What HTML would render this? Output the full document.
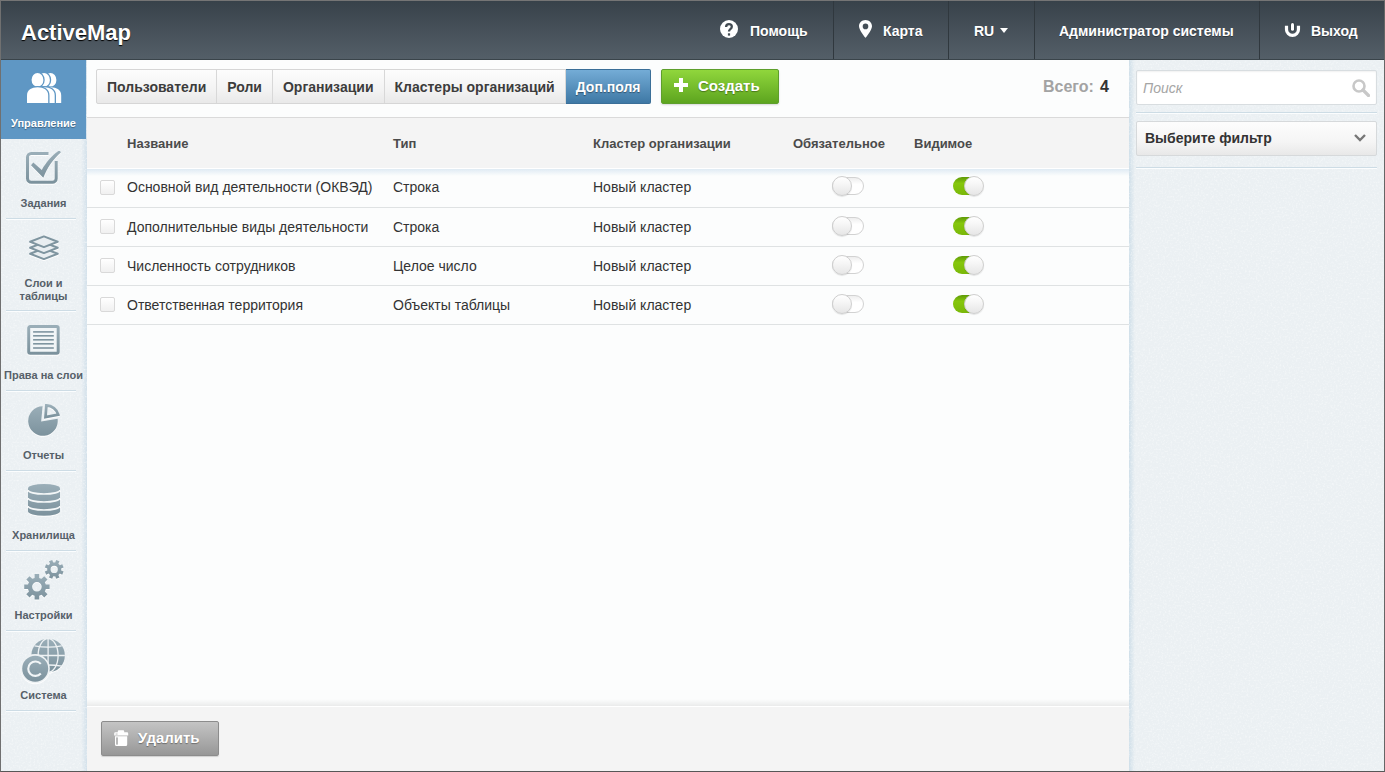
<!DOCTYPE html>
<html><head><meta charset="utf-8">
<style>
*{box-sizing:border-box;margin:0;padding:0}
html,body{width:1385px;height:772px;overflow:hidden;background:#fff}
body{font-family:"Liberation Sans",sans-serif;position:relative;color:#333}
.frame{position:absolute;left:0;top:0;width:1385px;height:772px;border-top:1px solid #757575;border-left:1px solid #707070;border-right:1px solid #666;border-bottom:1px solid #575757;pointer-events:none;z-index:50}
.a{position:absolute;white-space:nowrap}
/* header */
#hdr{position:absolute;left:1px;top:1px;width:1383px;height:59px;background:linear-gradient(#38424a,#545f68);border-bottom:1px solid #3a444a}
#logo{left:21px;top:20px;font-size:22px;font-weight:bold;color:#fff;text-shadow:0 1px 1px #000;line-height:26px}
.nav{top:23px;font-size:14px;font-weight:bold;color:#fff;line-height:16px;text-shadow:0 1px 0 rgba(0,0,0,.35)}
.nsep{position:absolute;top:1px;width:1px;height:58px;background:#30383e}
/* sidebar */
#side{position:absolute;left:1px;top:60px;width:86px;height:711px;background:#ebf0f3}
#side .edge{position:absolute;right:0;top:0;width:6px;height:100%;background:linear-gradient(90deg,rgba(210,224,234,0),#d3e1eb)}
.slab{left:1px;width:85px;text-align:center;font-size:11px;font-weight:bold;color:#566069;line-height:12px}
.ssep{position:absolute;left:6px;width:70px;height:1px;background:#cddce5;box-shadow:0 1px 0 #fbfdfe}
/* content */
#content{position:absolute;left:87px;top:60px;width:1042px;height:711px;background:#fcfdfd}
#rp{position:absolute;left:1129px;top:60px;width:255px;height:711px;background:#ebf0f3}
#rp .edge{position:absolute;left:0;top:0;width:6px;height:100%;background:linear-gradient(90deg,#cfdfe9,rgba(210,224,234,0))}
.tabs{position:absolute;left:96px;top:69px;height:35px;border:1px solid #d6d6d6;border-radius:2px;display:flex;background:linear-gradient(#fdfdfd,#f3f3f3 60%,#e9e9e9)}
.tab{height:33px;line-height:35px;padding:0 10px;font-size:14px;font-weight:bold;color:#3c3c3c;border-right:1px solid #d8d8d8}
.tab:last-child{border-right:0}
.tab.act{background:linear-gradient(#74acd6,#3e78a5);color:#fff;text-shadow:0 1px 1px rgba(0,0,0,.4);margin:-1px -1px -1px 0;height:35px;line-height:35px;border-radius:0 2px 2px 0;border:1px solid #3b6f98;border-left:0;padding:0 10px 0 10px}
.btn-create{position:absolute;left:661px;top:69px;width:118px;height:35px;border:1px solid #5e9f2c;border-radius:2px;box-shadow:0 1px 2px rgba(0,0,0,.15);background:linear-gradient(#90d63c,#5da51f);color:#fff;font-size:15px;font-weight:bold;text-shadow:0 1px 1px rgba(0,0,0,.35)}
.th{top:136px;font-size:13px;font-weight:bold;color:#4b4b4b;line-height:15px}
.td{font-size:14px;color:#333;line-height:16px}
.rowline{position:absolute;left:87px;width:1042px;height:1px;background:#dfe2e3}
.cb{position:absolute;left:100px;width:15px;height:15px;border:1px solid #d9d9d9;border-radius:2px;background:linear-gradient(#fff,#f0f0f0)}
.tg{position:absolute;width:32px;height:18px;border-radius:9px}
.tg.on{width:30px}
.tg.off{border:1px solid #d2d2d2;background:linear-gradient(#eee,#fff 40%)}
.tg.on{background:linear-gradient(#5f9a08,#86c70c 35%,#7ab80a)}
.ic{filter:drop-shadow(0 1px 0 rgba(255,255,255,.9))}
.knob{position:absolute;width:20px;height:20px;border-radius:50%;border:1px solid #cfcfcf;background:linear-gradient(#fff,#f6f6f6 40%,#e6e6e6);box-shadow:0 1px 1px rgba(0,0,0,.1)}
</style></head><body>
<div id="hdr"></div>
<div class="a" id="logo">ActiveMap</div>
<!-- nav -->
<svg class="a" style="left:720px;top:20px" width="18" height="18" viewBox="0 0 18 18"><circle cx="9" cy="9" r="9" fill="#fff"/><path d="M6.1,7.0C6.1,4.9 7.5,4.2 8.9,4.2C10.6,4.2 11.8,5.2 11.8,6.7C11.8,8.2 10.8,8.8 10.0,9.5C9.3,10.1 9.0,10.6 9.0,11.6" fill="none" stroke="#424b52" stroke-width="2.3"/><rect x="7.9" y="13.3" width="2.2" height="2.3" fill="#424b52"/></svg>
<div class="a nav" style="left:750px">Помощь</div>
<div class="nsep" style="left:833px"></div>
<svg class="a" style="left:859px;top:20px" width="13" height="18" viewBox="0 0 13 18"><path d="M6.5 0C2.9 0 0 2.8 0 6.3c0 3.9 6.5 11.7 6.5 11.7S13 10.2 13 6.3C13 2.8 10.1 0 6.5 0zm0 9.2A2.8 2.8 0 1 1 6.5 3.6a2.8 2.8 0 0 1 0 5.6z" fill="#fff"/></svg>
<div class="a nav" style="left:883px">Карта</div>
<div class="nsep" style="left:948px"></div>
<div class="a nav" style="left:974px">RU</div>
<svg class="a" style="left:1000px;top:28px" width="8" height="5" viewBox="0 0 8 5"><path d="M0 0h8L4 5z" fill="#fff"/></svg>
<div class="nsep" style="left:1034px"></div>
<div class="a nav" style="left:1059px">Администратор системы</div>
<div class="nsep" style="left:1259px"></div>
<svg class="a" style="left:1278px;top:16px" width="30" height="26" viewBox="0 0 30 26"><path d="M8.5,9.8V13.46A5.98,5.98 0 0 0 20.46,13.46V9.8" fill="none" stroke="#fff" stroke-width="3.2"/><path d="M14.5,8.4V13.3" stroke="#3b454c" stroke-width="5" stroke-linecap="round"/><path d="M14.5,8.4V13.3" stroke="#fff" stroke-width="3" stroke-linecap="round"/></svg>
<div class="a nav" style="left:1311px">Выход</div>

<!-- sidebar -->
<div id="side"><div class="edge"></div></div>
<svg class="a" style="left:1px;top:60px;opacity:.5" width="86" height="711"><filter id="nz" x="0" y="0" width="100%" height="100%"><feTurbulence type="fractalNoise" baseFrequency="0.55" numOctaves="2" seed="7"/><feColorMatrix type="matrix" values="0 0 0 0 1  0 0 0 0 1  0 0 0 0 1  0 0 0 2.2 -1.05"/></filter><rect width="86" height="711" filter="url(#nz)"/></svg>
<div class="a" style="left:1px;top:60px;width:85px;height:79px;background:#5f97c4"></div>
<div class="a slab" style="top:117px;color:#fff;text-shadow:0 1px 1px rgba(0,0,0,.35)">Управление</div>
<div class="a slab" style="top:197px">Задания</div>
<div class="ssep" style="top:218px"></div>
<div class="a slab" style="top:277px">Слои и</div><div class="a slab" style="top:290px">таблицы</div>
<div class="ssep" style="top:310px"></div>
<div class="a slab" style="top:369px">Права на слои</div>
<div class="ssep" style="top:390px"></div>
<div class="a slab" style="top:449px">Отчеты</div>
<div class="ssep" style="top:470px"></div>
<div class="a slab" style="top:529px">Хранилища</div>
<div class="ssep" style="top:550px"></div>
<div class="a slab" style="top:609px">Настройки</div>
<div class="ssep" style="top:630px"></div>
<div class="a slab" style="top:689px">Система</div>
<div class="ssep" style="top:710px"></div>

<!-- sidebar icons -->
<svg width="0" height="0" style="position:absolute"><defs><linearGradient id="ig" x1="0" y1="0" x2="0" y2="1"><stop offset="0" stop-color="#9aaeb8"/><stop offset="1" stop-color="#7c929d"/></linearGradient></defs></svg>
<svg class="a" style="left:24px;top:70px" width="40" height="36" viewBox="0 0 40 36"><g transform="translate(13,0)"><ellipse cx="13.5" cy="9.9" rx="5.9" ry="6.9" fill="#5f97c4" stroke="#5f97c4" stroke-width="0"/><ellipse cx="13.5" cy="9.9" rx="5.9" ry="6.9" fill="#fff"/><path d="M3,33V25.5C3,20 7.5,17.3 13.6,17.3 19.7,17.3 24.2,20 24.2,25.5V33Z" fill="#5f97c4" stroke="#5f97c4" stroke-width="1.6"/><path d="M3,33V25.5C3,20 7.5,17.3 13.6,17.3 19.7,17.3 24.2,20 24.2,25.5V33Z" fill="#fff"/></g><g transform="translate(6.5,0)"><ellipse cx="13.5" cy="9.9" rx="5.9" ry="6.9" fill="#5f97c4" stroke="#5f97c4" stroke-width="2.6"/><ellipse cx="13.5" cy="9.9" rx="5.9" ry="6.9" fill="#fff"/><path d="M3,33V25.5C3,20 7.5,17.3 13.6,17.3 19.7,17.3 24.2,20 24.2,25.5V33Z" fill="#5f97c4" stroke="#5f97c4" stroke-width="2.6"/><path d="M3,33V25.5C3,20 7.5,17.3 13.6,17.3 19.7,17.3 24.2,20 24.2,25.5V33Z" fill="#fff"/></g><g transform="translate(0,0)"><ellipse cx="13.5" cy="9.9" rx="5.9" ry="6.9" fill="#5f97c4" stroke="#5f97c4" stroke-width="2.6"/><ellipse cx="13.5" cy="9.9" rx="5.9" ry="6.9" fill="#fff"/><path d="M3,33V25.5C3,20 7.5,17.3 13.6,17.3 19.7,17.3 24.2,20 24.2,25.5V33Z" fill="#5f97c4" stroke="#5f97c4" stroke-width="2.6"/><path d="M3,33V25.5C3,20 7.5,17.3 13.6,17.3 19.7,17.3 24.2,20 24.2,25.5V33Z" fill="#fff"/></g></svg>
<svg class="a ic" style="left:22px;top:148px" width="42" height="40" viewBox="0 0 42 40">
<path d="M26.5,5.4H9.3A3.8,3.8 0 0 0 5.5,9.2V30.4A3.8,3.8 0 0 0 9.3,34.2H30.4A3.8,3.8 0 0 0 34.2,30.4V13" fill="none" stroke="url(#ig)" stroke-width="3"/>
<path d="M9,17.2L11.3,14.6L19.8,22C24,14.5 30,7.5 36.4,3.1C37.5,2.5 38.9,3.2 38.8,4.4C31.5,11 25.5,19 21.3,29.7Z" fill="url(#ig)"/>
</svg>
<svg class="a ic" style="left:24px;top:230px" width="40" height="36" viewBox="0 0 40 36"><g fill="#e9eef1" stroke="#7f95a0" stroke-width="2" stroke-linejoin="round"><path d="M19.9,18.4L33.7,23.8L19.9,29.1L6.1,23.8Z"/><path d="M19.9,12.4L33.7,17.8L19.9,23.1L6.1,17.8Z"/><path d="M19.9,6.4L33.7,11.8L19.9,17.1L6.1,11.8Z"/></g></svg>
<svg class="a ic" style="left:22px;top:320px" width="42" height="40" viewBox="0 0 42 40">
<rect x="6.7" y="6.6" width="29.5" height="26.6" rx="1.5" fill="#f1f5f7" stroke="url(#ig)" stroke-width="3"/>
<g fill="#7f95a0"><rect x="11.1" y="11.1" width="20.7" height="1.6"/><rect x="11.1" y="15" width="20.7" height="1.6"/><rect x="11.1" y="19" width="20.7" height="1.6"/><rect x="11.1" y="23" width="20.7" height="1.6"/><rect x="11.1" y="27.2" width="20.7" height="1.6"/></g>
</svg>
<svg class="a ic" style="left:22px;top:400px" width="42" height="40" viewBox="0 0 42 40">
<path d="M19.2,21.5L20.6,6.2A14.8,14.8 0 1 0 35.6,18.8Z" fill="url(#ig)"/>
<path d="M23.5,17.1L24.4,5.5A12.2,12.2 0 0 1 36.2,14.7Z" fill="none" stroke="url(#ig)" stroke-width="2.8" stroke-linejoin="miter"/>
</svg>
<svg class="a ic" style="left:22px;top:480px" width="42" height="40" viewBox="0 0 42 40">
<path d="M6,8.3A16,4.2 0 0 1 38,8.3V31.5A16,4.2 0 0 1 6,31.5Z" fill="url(#ig)"/>
<g fill="none" stroke="#f4f7f8" stroke-width="1.7"><path d="M6,10A16,4 0 0 0 38,10"/><path d="M6,18A16,4 0 0 0 38,18"/><path d="M6,26A16,4 0 0 0 38,26"/></g>
</svg>
<svg class="a ic" style="left:20px;top:556px" width="48" height="48" viewBox="0 0 48 48"><path fill-rule="evenodd" fill="url(#ig)" d="M35.18,6.47 L36.20,4.01 L39.43,5.35 L38.41,7.81 A7.0,7.0 0 0 1 39.79,9.19 L42.25,8.17 L43.59,11.40 L41.13,12.42 A7.0,7.0 0 0 1 41.13,14.38 L43.59,15.40 L42.25,18.63 L39.79,17.61 A7.0,7.0 0 0 1 38.41,18.99 L39.43,21.45 L36.20,22.79 L35.18,20.33 A7.0,7.0 0 0 1 33.22,20.33 L32.20,22.79 L28.97,21.45 L29.99,18.99 A7.0,7.0 0 0 1 28.61,17.61 L26.15,18.63 L24.81,15.40 L27.27,14.38 A7.0,7.0 0 0 1 27.27,12.42 L24.81,11.40 L26.15,8.17 L28.61,9.19 A7.0,7.0 0 0 1 29.99,7.81 L28.97,5.35 L32.20,4.01 L33.22,6.47 A7.0,7.0 0 0 1 35.18,6.47Z M37.80,13.40 A3.6,3.6 0 1 0 30.60,13.40 A3.6,3.6 0 1 0 37.80,13.40Z"/><path fill-rule="evenodd" fill="url(#ig)" d="M14.60,21.89 L14.60,18.11 L19.20,18.11 L19.20,21.89 A9.2,9.2 0 0 1 21.57,22.87 L24.25,20.20 L27.50,23.45 L24.83,26.13 A9.2,9.2 0 0 1 25.81,28.50 L29.59,28.50 L29.59,33.10 L25.81,33.10 A9.2,9.2 0 0 1 24.83,35.47 L27.50,38.15 L24.25,41.40 L21.57,38.73 A9.2,9.2 0 0 1 19.20,39.71 L19.20,43.49 L14.60,43.49 L14.60,39.71 A9.2,9.2 0 0 1 12.23,38.73 L9.55,41.40 L6.30,38.15 L8.97,35.47 A9.2,9.2 0 0 1 7.99,33.10 L4.21,33.10 L4.21,28.50 L7.99,28.50 A9.2,9.2 0 0 1 8.97,26.13 L6.30,23.45 L9.55,20.20 L12.23,22.87 A9.2,9.2 0 0 1 14.60,21.89Z M21.70,30.80 A4.8,4.8 0 1 0 12.10,30.80 A4.8,4.8 0 1 0 21.70,30.80Z"/></svg>
<svg class="a ic" style="left:18px;top:636px" width="50" height="50" viewBox="0 0 50 50">
<circle cx="30.1" cy="19.5" r="16.8" fill="url(#ig)"/>
<g fill="none" stroke="#eef2f4" stroke-width="1.3">
<ellipse cx="30.1" cy="19.5" rx="10" ry="16.8"/>
<path d="M30.1,2.7V36.3"/>
<path d="M13.3,19.5H46.9"/>
<path d="M16.5,9.8Q30.1,12.5 43.7,9.8"/>
<path d="M16.2,30.2Q30.1,27.8 44,30.2"/>
</g>
<circle cx="17.2" cy="32.7" r="14.6" fill="#eef2f4"/>
<circle cx="17.2" cy="32.7" r="13" fill="url(#ig)"/>
<path d="M22.8,27.9A7.2,7.2 0 1 0 22.8,37.5" fill="none" stroke="#f1f5f7" stroke-width="2.1"/>
</svg>

<!-- content -->
<div id="content"></div>
<div class="tabs">
  <div class="tab">Пользователи</div><div class="tab">Роли</div><div class="tab">Организации</div><div class="tab">Кластеры организаций</div><div class="tab act">Доп.поля</div>
</div>
<div class="btn-create"></div>
<svg class="a" style="left:674px;top:78px" width="14" height="14" viewBox="0 0 14 14"><path d="M5 0h4v5h5v4H9v5H5V9H0V5h5z" fill="#fff"/></svg>
<div class="a" style="left:698px;top:77px;font-size:15px;font-weight:bold;color:#fff;line-height:17px;text-shadow:0 1px 1px rgba(0,0,0,.35)">Создать</div>
<div class="a" style="left:1043px;top:78px;font-size:16px;font-weight:bold;color:#a3a3a3;line-height:18px">Всего:</div><div class="a" style="left:1100px;top:78px;font-size:16px;font-weight:bold;color:#333;line-height:18px">4</div>

<!-- table header -->
<div class="a" style="left:87px;top:117px;width:1042px;height:1px;background:#dadada"></div>
<div class="a" style="left:87px;top:118px;width:1042px;height:50px;background:#f4f4f4"></div>
<div class="a" style="left:87px;top:168px;width:1042px;height:1px;background:#fff"></div>
<div class="a" style="left:87px;top:169px;width:1042px;height:7px;background:linear-gradient(rgba(200,220,235,.55),rgba(230,240,245,0))"></div>
<div class="a th" style="left:127px">Название</div>
<div class="a th" style="left:393px">Тип</div>
<div class="a th" style="left:593px">Кластер организации</div>
<div class="a th" style="left:793px">Обязательное</div>
<div class="a th" style="left:914px">Видимое</div>

<!-- rows -->
<div class="rowline" style="top:207px"></div>
<div class="rowline" style="top:246px"></div>
<div class="rowline" style="top:285px"></div>
<div class="rowline" style="top:324px"></div>

<div class="cb" style="top:180px"></div>
<div class="a td" style="left:127px;top:179px">Основной вид деятельности (ОКВЭД)</div>
<div class="a td" style="left:393px;top:179px">Строка</div>
<div class="a td" style="left:593px;top:179px">Новый кластер</div>
<div class="tg off" style="left:832px;top:177px"></div><div class="knob" style="left:832px;top:176px"></div>
<div class="tg on" style="left:953px;top:177px"></div><div class="knob" style="left:964px;top:176px"></div>

<div class="cb" style="top:219px"></div>
<div class="a td" style="left:127px;top:219px">Дополнительные виды деятельности</div>
<div class="a td" style="left:393px;top:219px">Строка</div>
<div class="a td" style="left:593px;top:219px">Новый кластер</div>
<div class="tg off" style="left:832px;top:217px"></div><div class="knob" style="left:832px;top:216px"></div>
<div class="tg on" style="left:953px;top:217px"></div><div class="knob" style="left:964px;top:216px"></div>

<div class="cb" style="top:258px"></div>
<div class="a td" style="left:127px;top:258px">Численность сотрудников</div>
<div class="a td" style="left:393px;top:258px">Целое число</div>
<div class="a td" style="left:593px;top:258px">Новый кластер</div>
<div class="tg off" style="left:832px;top:256px"></div><div class="knob" style="left:832px;top:255px"></div>
<div class="tg on" style="left:953px;top:256px"></div><div class="knob" style="left:964px;top:255px"></div>

<div class="cb" style="top:297px"></div>
<div class="a td" style="left:127px;top:297px">Ответственная территория</div>
<div class="a td" style="left:393px;top:297px">Объекты таблицы</div>
<div class="a td" style="left:593px;top:297px">Новый кластер</div>
<div class="tg off" style="left:832px;top:295px"></div><div class="knob" style="left:832px;top:294px"></div>
<div class="tg on" style="left:953px;top:295px"></div><div class="knob" style="left:964px;top:294px"></div>

<!-- footer -->
<div class="a" style="left:87px;top:699px;width:1042px;height:7px;background:linear-gradient(rgba(0,0,0,0),rgba(0,0,0,.07))"></div>
<div class="a" style="left:87px;top:706px;width:1042px;height:1px;background:#fff"></div>
<div class="a" style="left:87px;top:707px;width:1042px;height:64px;background:#f4f4f4"></div>
<div class="a" style="left:101px;top:721px;width:118px;height:35px;border:1px solid #8c8c8c;border-radius:2px;background:linear-gradient(#c4c4c4,#979797);box-shadow:0 1px 1px rgba(0,0,0,.15)"></div>
<svg class="a" style="left:114px;top:730px" width="15" height="17" viewBox="0 0 15 17"><path d="M4.8,0.3h4.4a1,1 0 0 1 1,1v1h2.8a1.2,1.2 0 0 1 1.2,1.2v2.1H0.2V3.5a1.2,1.2 0 0 1 1.2,-1.2h2.4v-1a1,1 0 0 1 1,-1z" fill="#fff"/><path d="M1,6.3h12.2v8.3a1.5,1.5 0 0 1 -1.5,1.5H2.5A1.5,1.5 0 0 1 1,14.6z" fill="#fff"/><rect x="2.2" y="7.4" width="1.6" height="7.2" fill="#a8a8a8"/><rect x="1.6" y="3.6" width="2" height="0.9" fill="#b5b5b5"/></svg>
<div class="a" style="left:138px;top:729px;font-size:15px;font-weight:bold;color:#fff;line-height:17px;text-shadow:0 1px 1px rgba(0,0,0,.35)">Удалить</div>

<!-- right panel -->
<div id="rp"><div class="edge"></div></div>
<svg class="a" style="left:1129px;top:60px;opacity:.5" width="255" height="711"><filter id="nz2" x="0" y="0" width="100%" height="100%"><feTurbulence type="fractalNoise" baseFrequency="0.55" numOctaves="2" seed="11"/><feColorMatrix type="matrix" values="0 0 0 0 1  0 0 0 0 1  0 0 0 0 1  0 0 0 2.2 -1.05"/></filter><rect width="255" height="711" filter="url(#nz2)"/></svg>
<div class="a" style="left:1136px;top:70px;width:241px;height:35px;border:1px solid #d8dde0;border-radius:2px;background:#fff;box-shadow:inset 0 1px 2px rgba(0,0,0,.06)"></div>
<div class="a" style="left:1143px;top:80px;font-size:14px;font-style:italic;color:#a5a5a5;line-height:16px">Поиск</div>
<svg class="a" style="left:1352px;top:79px" width="18" height="18" viewBox="0 0 18 18"><circle cx="7" cy="7" r="5.5" fill="none" stroke="#c8c8c8" stroke-width="2.6"/><path d="M11 11l5.5 5.5" stroke="#c8c8c8" stroke-width="3.2" stroke-linecap="round"/></svg>
<div class="a" style="left:1136px;top:112px;width:241px;height:1px;background:#cddce5;box-shadow:0 1px 0 #fbfdfe"></div>
<div class="a" style="left:1136px;top:121px;width:241px;height:35px;border:1px solid #d6d9db;border-radius:2px;background:linear-gradient(#fdfdfd,#f5f5f5 60%,#e8e8e8)"></div>
<div class="a" style="left:1145px;top:130px;font-size:14px;font-weight:bold;color:#333;line-height:16px">Выберите фильтр</div>
<svg class="a" style="left:1354px;top:134px" width="12" height="8" viewBox="0 0 12 8"><path d="M1 1l5 5 5-5" fill="none" stroke="#777" stroke-width="2.4"/></svg>
<div class="a" style="left:1136px;top:167px;width:241px;height:1px;background:#cddce5;box-shadow:0 1px 0 #fbfdfe"></div>

<div class="frame"></div>
</body></html>
